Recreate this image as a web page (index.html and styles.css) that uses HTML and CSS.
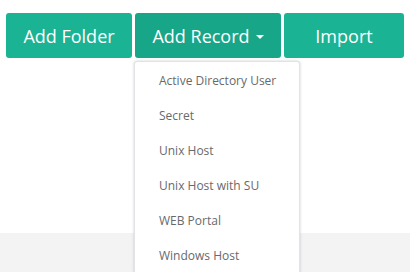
FILE: index.html
```html
<!DOCTYPE html>
<html lang="en">

<head>
    <meta charset="UTF-8">
    <meta name="viewport" content="width=device-width, initial-scale=1.0">
    <title>Records</title>
    <link rel="stylesheet" href="styles.css">
</head>

<body>
    <div class="top">
        <div class="toolbar">
            <a href="javascript:" class="btn">Add Folder</a>
            <div class="drop">
                <a href="javascript:" class="btn active">Add Record <span class="caret"></span></a>
                <ul class="menu">
                    <li><a href="javascript:">Active Directory User</a></li>
                    <li><a href="javascript:">Secret</a></li>
                    <li><a href="javascript:">Unix Host</a></li>
                    <li><a href="javascript:">Unix Host with SU</a></li>
                    <li><a href="javascript:">WEB Portal</a></li>
                    <li><a href="javascript:">Windows Host</a></li>
                </ul>
            </div>
            <a href="javascript:" class="btn wide">Import</a>
        </div>
    </div>
    <div class="bottom"></div>
</body>

</html>
```
FILE: styles.css
```css
* {
    margin: 0;
    padding: 0;
    box-sizing: border-box;
}

ul {
    list-style: none;
}

a {
    text-decoration: none;
}

body {
    background: #fff;
    font-family: "Open Sans", "Liberation Sans", sans-serif;
    color: #676a6c;
    height: 272px;
    overflow: hidden;
}

.top {
    height: 233px;
    padding: 13px 0 0 6px;
}

.bottom {
    height: 39px;
    background: #f3f3f4;
}

.toolbar {
    display: flex;
    gap: 3px;
}

.btn {
    display: flex;
    align-items: center;
    justify-content: center;
    width: 126px;
    height: 45px;
    background: #1ab394;
    color: #fff;
    font-size: 18px;
    border-radius: 3px;
}

.btn.active {
    width: 146px;
    background: #18a689;
}

.btn.wide {
    width: 120px;
}

.caret {
    display: inline-block;
    width: 0;
    height: 0;
    margin-left: 6px;
    margin-top: 2px;
    border-top: 4px solid #fff;
    border-left: 4px solid transparent;
    border-right: 4px solid transparent;
}

.drop {
    position: relative;
}

.menu {
    position: absolute;
    top: 48px;
    left: -1px;
    width: 166px;
    background: #fff;
    border: 1px solid #e1e3e6;
    border-radius: 3px;
    box-shadow: 0 0 3px rgba(86, 96, 117, 0.3);
    padding: 1px 0 0;
    z-index: 10;
}

.menu a {
    display: block;
    height: 35px;
    line-height: 35px;
    padding-left: 24px;
    font-size: 12px;
    color: #676a6c;
}
```
